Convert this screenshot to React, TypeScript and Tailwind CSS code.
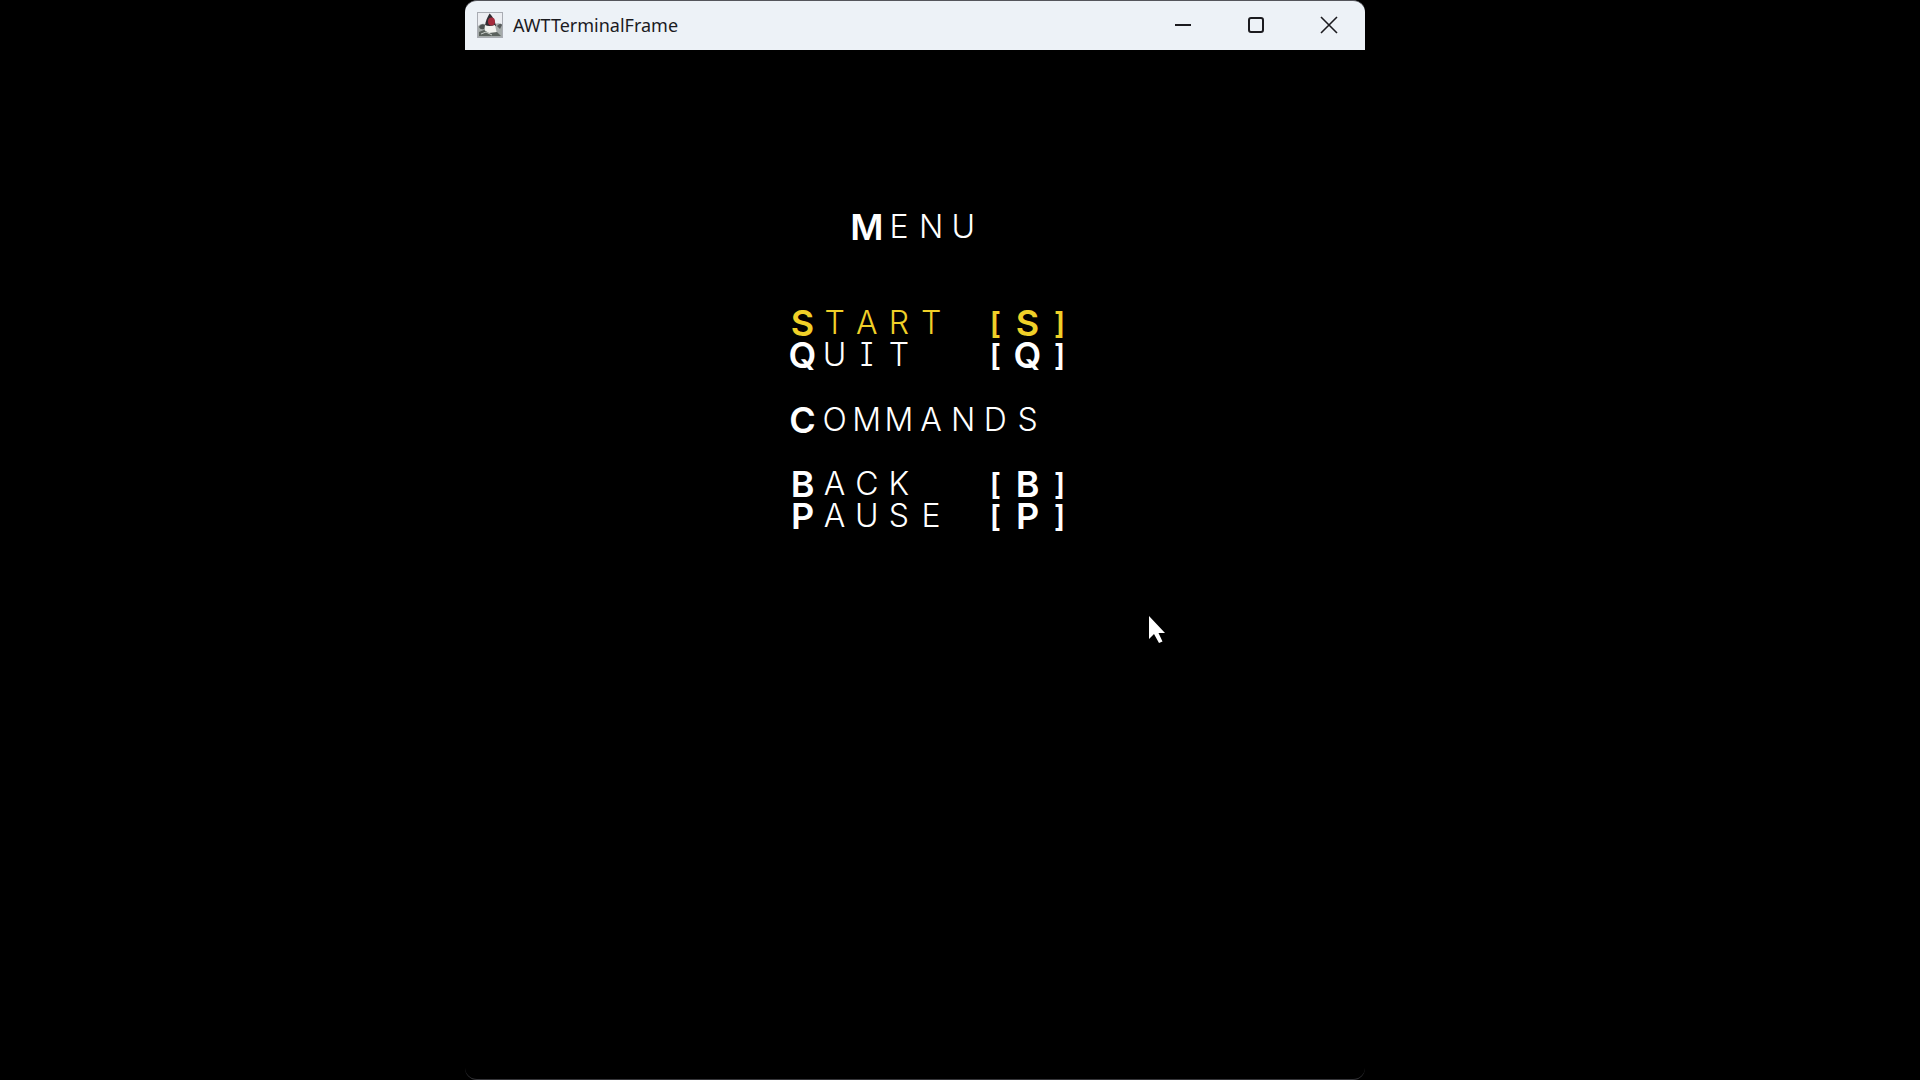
import React from 'react';

type CellsProps = { text: string; cap?: boolean };

function cellClass(ch: string, large: boolean) {
  if (ch === '[' || ch === ']') return 'flex items-center justify-center text-[30px] font-semibold';
  return large
    ? 'flex items-center justify-center text-[36px] font-semibold'
    : 'flex items-center justify-center text-[32px] font-light';
}

/* One terminal cell per character; every cell is one column of the 28-column screen. */
function Cells({ text, cap = false }: CellsProps) {
  return (
    <>
      {text.split('').map((ch, i) => (
        <span key={i} className={cellClass(ch, cap || i === 0)}>
          {ch}
        </span>
      ))}
    </>
  );
}

type ItemProps = { label: string; hotkey: string; place: string; selected?: boolean };

function MenuItem({ label, hotkey, place, selected = false }: ItemProps) {
  return (
    <button
      type="button"
      className={`${place} col-start-11 col-span-9 grid grid-cols-subgrid uppercase leading-8 ${
        selected ? 'text-[#f0d028]' : 'text-white'
      }`}
    >
      <span className="col-span-6 grid grid-cols-subgrid">
        <Cells text={label} />
      </span>
      <span className="col-span-3 grid grid-cols-subgrid">
        <Cells text={`[${hotkey}]`} cap />
      </span>
    </button>
  );
}

function DukeIcon() {
  return (
    <svg viewBox="0 0 26 26" className="size-[26px]" aria-hidden="true">
      <rect x="0.5" y="0.5" width="25" height="25" fill="#eceef2" stroke="#a9acb3" />
      <path d="M1 14 Q4 11 8 12 L18 12 Q23 10 25 13 V25 H1Z" fill="#a4aaa9" />
      <path d="M12.5 1.5 C10 6 8.5 9 8 14 L19 14 C18 9 15.5 4 12.5 1.5Z" fill="#302c32" />
      <path d="M8 13 Q12 15 18 13 L20 22 H8Z" fill="#f1f2ef" />
      <ellipse cx="14.5" cy="9.5" rx="3.5" ry="4" fill="#a52b3c" />
      <path d="M2 15 Q4 11 8 13 L7 17 Q3 18 2 15Z" fill="#4b5150" />
      <path d="M20 14 Q24 10 25 13 L23 17Z" fill="#555a5a" />
      <path d="M2 20 L7 18 L12 21 L20 20 L24 24 H2Z" fill="#5b625e" />
      <path d="M4 22 L9 20 L15 23" stroke="#c9cfca" fill="none" />
    </svg>
  );
}

function TitleBar() {
  return (
    <header className="flex h-[50px] shrink-0 items-center rounded-t-xl border-t border-[#55565c] bg-[#edf2f7] pb-0.5 pl-3 text-[#1b1b1f]">
      <DukeIcon />
      <h1 className="ml-2.5 flex-1 font-['Noto_Sans',sans-serif] text-[18px] leading-6">AWTTerminalFrame</h1>
      <button type="button" aria-label="Minimize" className="flex h-full w-[73px] items-center justify-center">
        <svg viewBox="0 0 18 18" className="size-[18px]" fill="none" stroke="currentColor" strokeWidth="2">
          <path d="M1 9 H17" />
        </svg>
      </button>
      <button type="button" aria-label="Maximize" className="flex h-full w-[73px] items-center justify-center">
        <svg viewBox="0 0 18 18" className="size-[18px]" fill="none" stroke="currentColor" strokeWidth="2">
          <rect x="2" y="2" width="14" height="14" rx="2" />
        </svg>
      </button>
      <button type="button" aria-label="Close" className="flex h-full w-[73px] items-center justify-center">
        <svg viewBox="0 0 18 18" className="size-[18px]" fill="none" stroke="currentColor" strokeWidth="1.6">
          <path d="M1 1 L17 17 M17 1 L1 17" />
        </svg>
      </button>
    </header>
  );
}

export default function App() {
  return (
    <div className="grid min-h-screen grid-cols-[465fr_900fr_555fr] bg-black">
      <div className="relative col-start-2 flex flex-col rounded-b-xl border-b border-[#36363a]">
        <TitleBar />
        <main className="grid flex-1 grid-cols-28 grid-rows-[repeat(32,minmax(0,1fr))] font-[Inter,sans-serif] text-white [font-feature-settings:'cv08']">
          <h2 className="col-start-13 col-span-4 row-start-6 grid grid-cols-subgrid uppercase leading-8">
            <Cells text="Menu" />
          </h2>
          <MenuItem label="Start" hotkey="S" place="row-start-9" selected />
          <MenuItem label="Quit" hotkey="Q" place="row-start-10" />
          <h3 className="col-start-11 col-span-8 row-start-12 grid grid-cols-subgrid uppercase leading-8">
            <Cells text="Commands" />
          </h3>
          <MenuItem label="Back" hotkey="B" place="row-start-14" />
          <MenuItem label="Pause" hotkey="P" place="row-start-15" />
        </main>
        <svg
          viewBox="0 0 17 28"
          className="pointer-events-none absolute left-[76%] top-[57%] h-7 w-[17px]"
          aria-hidden="true"
        >
          <path d="M0 1 V24 L5 19 L10 28 L13.5 26.500 L9.5 18 H16Z" fill="#fff" />
        </svg>
      </div>
    </div>
  );
}
